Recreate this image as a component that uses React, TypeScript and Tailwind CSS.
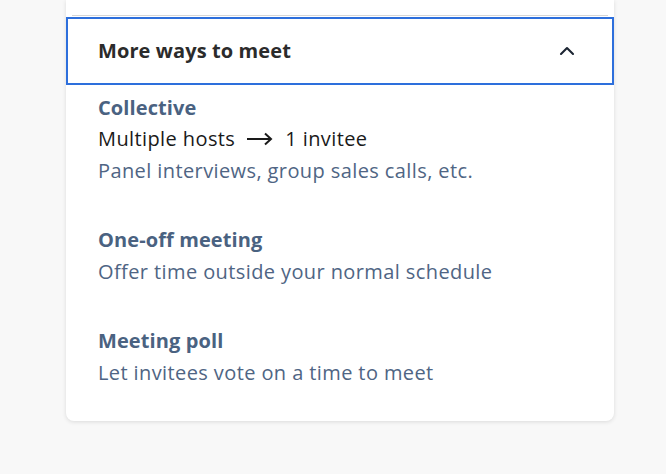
import { ChevronUp } from "lucide-react";

const options = [
  {
    title: "One-off meeting",
    desc: "Offer time outside your normal schedule",
  },
  {
    title: "Meeting poll",
    desc: "Let invitees vote on a time to meet",
  },
];

export default function App() {
  return (
    <div
      className="h-[474px] w-[666px] overflow-hidden bg-[#f8f8f8]"
      style={{ fontFamily: "'Open Sans', Lato, sans-serif" }}
    >
      <div className="ml-[66px] w-[548px] rounded-b-lg bg-white pt-[15px] pb-[33px] shadow-[0_1px_4px_rgba(0,0,0,0.12)]">
        <div className="mx-[6px] h-px bg-[#d6d6d6]" />
        <button className="mt-px flex h-[68px] w-full items-center justify-between border-2 border-[#2d6fdc] pl-[30px] pr-[33px] pb-px text-left">
          <span className="text-[20px] font-bold tracking-[0.1px] text-[#2b2b2b]">More ways to meet</span>
          <ChevronUp size={24} strokeWidth={2.1} className="text-[#1c2533]" />
        </button>

        <div className="px-[32px] pt-[7px] text-[20px] leading-[31px] tracking-[0.4px]">
          <div>
            <div className="font-bold tracking-[0.1px] text-[#4a6281]">Collective</div>
            <div className="flex items-center text-[#1a1a1a]">
              Multiple hosts
              <svg width="28" height="14" viewBox="0 0 28 14" className="mx-[11px]" fill="none" stroke="#1a1a1a" strokeWidth="2">
                <path d="M1 7h24M19 1.5 25 7l-6 5.5" />
              </svg>
              1 invitee
            </div>
            <div className="mt-px text-[#4f6584]">Panel interviews, group sales calls, etc.</div>
          </div>

          {options.map((o) => (
            <div key={o.title} className="mt-[38px]">
              <div className="font-bold tracking-[0.1px] text-[#4a6281]">{o.title}</div>
              <div className="mt-px text-[#4f6584]">{o.desc}</div>
            </div>
          ))}
        </div>
      </div>
    </div>
  );
}
